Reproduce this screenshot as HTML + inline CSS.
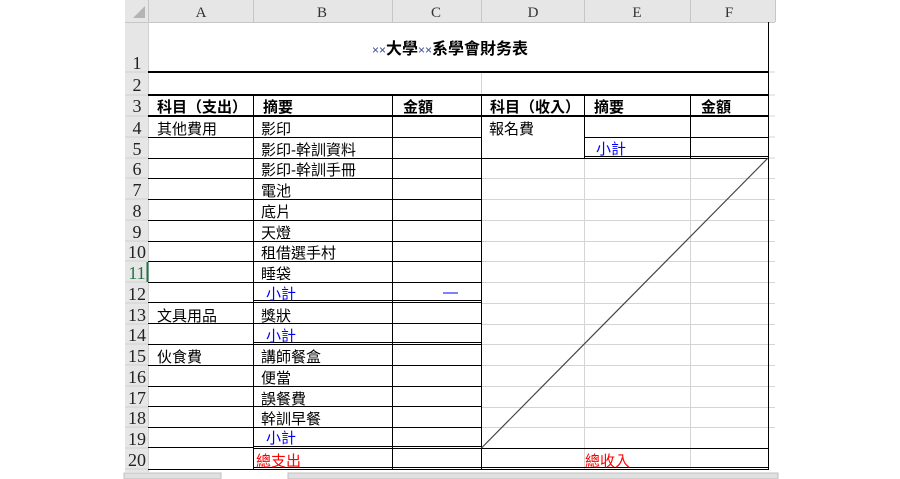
<!DOCTYPE html>
<html><head><meta charset="utf-8"><style>
html,body{margin:0;padding:0;background:#fff;width:900px;height:479px;overflow:hidden}
svg{display:block}
text{font-family:"Liberation Sans","Noto Sans CJK TC","WenQuanYi Zen Hei",sans-serif;font-size:15px;fill:#000}
.rh{font-family:"Liberation Serif","Noto Serif CJK SC",serif;font-size:18px;fill:#222;text-anchor:middle}
.ch{font-family:"Liberation Serif",serif;font-size:15px;fill:#333;text-anchor:middle}
.b{font-weight:bold}
.blue{fill:#0000ff}
.red{fill:#ff0000}
</style></head><body>
<svg width="900" height="479" xmlns="http://www.w3.org/2000/svg">
<rect x="125" y="0" width="650" height="22" fill="#e6e6e6"/>
<rect x="125" y="0" width="23" height="472" fill="#e6e6e6"/>
<polygon points="133,18 145,18 145,6" fill="#b4b4b4"/>
<g stroke="#c6c6c6" stroke-width="1">
<line x1="148.5" y1="0" x2="148.5" y2="22"/>
<line x1="253.5" y1="0" x2="253.5" y2="22"/>
<line x1="392.5" y1="0" x2="392.5" y2="22"/>
<line x1="481.5" y1="0" x2="481.5" y2="22"/>
<line x1="584.5" y1="0" x2="584.5" y2="22"/>
<line x1="690.5" y1="0" x2="690.5" y2="22"/>
<line x1="775.5" y1="0" x2="775.5" y2="22"/>
<line x1="125" y1="22.5" x2="775" y2="22.5"/>
</g>
<g stroke="#d0d0d0">
<line x1="125" y1="72" x2="148" y2="72"/><line x1="125" y1="95" x2="148" y2="95"/><line x1="125" y1="116" x2="148" y2="116"/>
<line x1="125" y1="137" x2="148" y2="137"/><line x1="125" y1="158" x2="148" y2="158"/><line x1="125" y1="178" x2="148" y2="178"/>
<line x1="125" y1="199" x2="148" y2="199"/><line x1="125" y1="220" x2="148" y2="220"/><line x1="125" y1="241" x2="148" y2="241"/>
<line x1="125" y1="261" x2="148" y2="261"/><line x1="125" y1="282" x2="148" y2="282"/><line x1="125" y1="303" x2="148" y2="303"/>
<line x1="125" y1="324" x2="148" y2="324"/><line x1="125" y1="344" x2="148" y2="344"/><line x1="125" y1="365" x2="148" y2="365"/>
<line x1="125" y1="386" x2="148" y2="386"/><line x1="125" y1="407" x2="148" y2="407"/><line x1="125" y1="427" x2="148" y2="427"/>
<line x1="125" y1="448" x2="148" y2="448"/><line x1="125" y1="469" x2="148" y2="469"/>
<line x1="148.5" y1="22" x2="148.5" y2="472"/>
</g>
<line x1="147.5" y1="262" x2="147.5" y2="282" stroke="#217346" stroke-width="2"/>
<text class="ch" x="201" y="17">A</text><text class="ch" x="322" y="17">B</text><text class="ch" x="436" y="17">C</text>
<text class="ch" x="533" y="17">D</text><text class="ch" x="637" y="17">E</text><text class="ch" x="729" y="17">F</text>
<text class="rh" x="137" y="69">1</text><text class="rh" x="137" y="91">2</text><text class="rh" x="137" y="112">3</text>
<text class="rh" x="137" y="134">4</text><text class="rh" x="137" y="155">5</text><text class="rh" x="137" y="175">6</text>
<text class="rh" x="137" y="196">7</text><text class="rh" x="137" y="217">8</text><text class="rh" x="137" y="238">9</text>
<text class="rh" x="137" y="258">10</text><text class="rh" x="137" y="279" style="fill:#217346">11</text><text class="rh" x="137" y="300">12</text>
<text class="rh" x="137" y="321">13</text><text class="rh" x="137" y="341">14</text><text class="rh" x="137" y="362">15</text>
<text class="rh" x="137" y="383">16</text><text class="rh" x="137" y="404">17</text><text class="rh" x="137" y="424">18</text>
<text class="rh" x="137" y="445">19</text><text class="rh" x="137" y="466">20</text>
<g stroke="#d4d4d4">
<line x1="584.5" y1="158" x2="584.5" y2="448"/><line x1="690.5" y1="158" x2="690.5" y2="448"/>
<line x1="690.5" y1="448" x2="690.5" y2="469"/><line x1="584.5" y1="448" x2="584.5" y2="469"/>
<line x1="768" y1="72" x2="775" y2="72"/><line x1="768" y1="95" x2="775" y2="95"/><line x1="768" y1="116" x2="775" y2="116"/>
<line x1="768" y1="137" x2="775" y2="137"/><line x1="768" y1="158" x2="775" y2="158"/>
<line x1="481" y1="178.5" x2="775" y2="178.5"/><line x1="481" y1="199.5" x2="775" y2="199.5"/><line x1="481" y1="220.5" x2="775" y2="220.5"/>
<line x1="481" y1="241.5" x2="775" y2="241.5"/><line x1="481" y1="261.5" x2="775" y2="261.5"/><line x1="481" y1="282.5" x2="775" y2="282.5"/>
<line x1="481" y1="303.5" x2="775" y2="303.5"/><line x1="481" y1="324.5" x2="775" y2="324.5"/><line x1="481" y1="344.5" x2="775" y2="344.5"/>
<line x1="481" y1="365.5" x2="775" y2="365.5"/><line x1="481" y1="386.5" x2="775" y2="386.5"/><line x1="481" y1="407.5" x2="775" y2="407.5"/>
<line x1="481" y1="427.5" x2="775" y2="427.5"/>
<line x1="481.5" y1="72" x2="481.5" y2="95"/>
</g>
<g stroke="#000" stroke-width="1">
<line x1="768.5" y1="22" x2="768.5" y2="470"/>
<line x1="148" y1="72" x2="769" y2="72" stroke-width="2"/>
<line x1="148" y1="95" x2="769" y2="95" stroke-width="2"/>
<line x1="148" y1="116" x2="769" y2="116" stroke-width="2"/>
<line x1="253.5" y1="95" x2="253.5" y2="470"/>
<line x1="392.5" y1="95" x2="392.5" y2="470"/>
<line x1="481.5" y1="95" x2="481.5" y2="470"/>
<line x1="584.5" y1="95" x2="584.5" y2="158"/>
<line x1="690.5" y1="95" x2="690.5" y2="158"/>
<line x1="148" y1="137.5" x2="481" y2="137.5"/><line x1="148" y1="158.5" x2="481" y2="158.5"/>
<line x1="148" y1="178.5" x2="481" y2="178.5"/><line x1="148" y1="199.5" x2="481" y2="199.5"/>
<line x1="148" y1="220.5" x2="481" y2="220.5"/><line x1="148" y1="241.5" x2="481" y2="241.5"/>
<line x1="148" y1="261.5" x2="481" y2="261.5"/><line x1="148" y1="282.5" x2="481" y2="282.5"/>
<line x1="148" y1="302.5" x2="253" y2="302.5"/>
<line x1="253" y1="300.5" x2="481" y2="300.5"/><line x1="253" y1="302.5" x2="481" y2="302.5"/>
<line x1="148" y1="323.5" x2="481" y2="323.5"/>
<line x1="148" y1="344.5" x2="253" y2="344.5"/>
<line x1="253" y1="342.5" x2="481" y2="342.5"/><line x1="253" y1="344.5" x2="481" y2="344.5"/>
<line x1="148" y1="365.5" x2="481" y2="365.5"/><line x1="148" y1="386.5" x2="481" y2="386.5"/>
<line x1="148" y1="406.5" x2="481" y2="406.5"/><line x1="148" y1="427.5" x2="481" y2="427.5"/>
<line x1="148" y1="447.5" x2="253" y2="447.5"/>
<line x1="253" y1="446.5" x2="481" y2="446.5"/><line x1="253" y1="448.5" x2="769" y2="448.5"/>
<line x1="148" y1="469.5" x2="253" y2="469.5"/>
<line x1="253" y1="467.5" x2="769" y2="467.5"/><line x1="253" y1="469.5" x2="769" y2="469.5"/>
<line x1="584" y1="137.5" x2="769" y2="137.5"/>
<line x1="481" y1="158.5" x2="584" y2="158.5"/>
<line x1="584" y1="156.5" x2="769" y2="156.5"/><line x1="584" y1="158.5" x2="769" y2="158.5"/>
</g>
<line x1="481.5" y1="448" x2="768" y2="158" stroke="#444" stroke-width="1.2"/>
<text x="372" y="54" class="b" style="font-size:16px"><tspan style="fill:#3a4a9a;font-size:12px;font-weight:normal">××</tspan>大學<tspan style="fill:#3a4a9a;font-size:12px;font-weight:normal">××</tspan>系學會財务表</text>
<text x="157" y="112" class="b">科目（支出）</text><text x="263" y="112" class="b">摘要</text><text x="403" y="112" class="b">金額</text>
<text x="490" y="112" class="b">科目（收入）</text><text x="594" y="112" class="b">摘要</text><text x="701" y="112" class="b">金額</text>
<text x="157" y="134">其他費用</text><text x="261" y="134">影印</text><text x="489" y="134">報名費</text>
<text x="261" y="155">影印-幹訓資料</text><text x="596" y="154" class="blue">小計</text>
<text x="261" y="175">影印-幹訓手冊</text>
<text x="261" y="196">電池</text><text x="261" y="217">底片</text><text x="261" y="238">天燈</text>
<text x="261" y="258">租借選手村</text><text x="261" y="279">睡袋</text>
<text x="266" y="299" class="blue">小計</text><text x="443" y="297" class="blue">—</text>
<text x="157" y="321">文具用品</text><text x="261" y="321">獎狀</text>
<text x="266" y="341" class="blue">小計</text>
<text x="157" y="362">伙食費</text><text x="261" y="362">講師餐盒</text>
<text x="261" y="383">便當</text><text x="261" y="404">誤餐費</text><text x="261" y="424">幹訓早餐</text>
<text x="266" y="443" class="blue">小計</text>
<text x="256" y="466" class="red">總支出</text><text x="585" y="466" class="red">總收入</text>
<rect x="124" y="473" width="97" height="6" fill="#e0e0e0" stroke="#c0c0c0"/>
<rect x="288" y="473" width="490" height="6" fill="#e0e0e0" stroke="#c0c0c0"/>
</svg>
</body></html>
